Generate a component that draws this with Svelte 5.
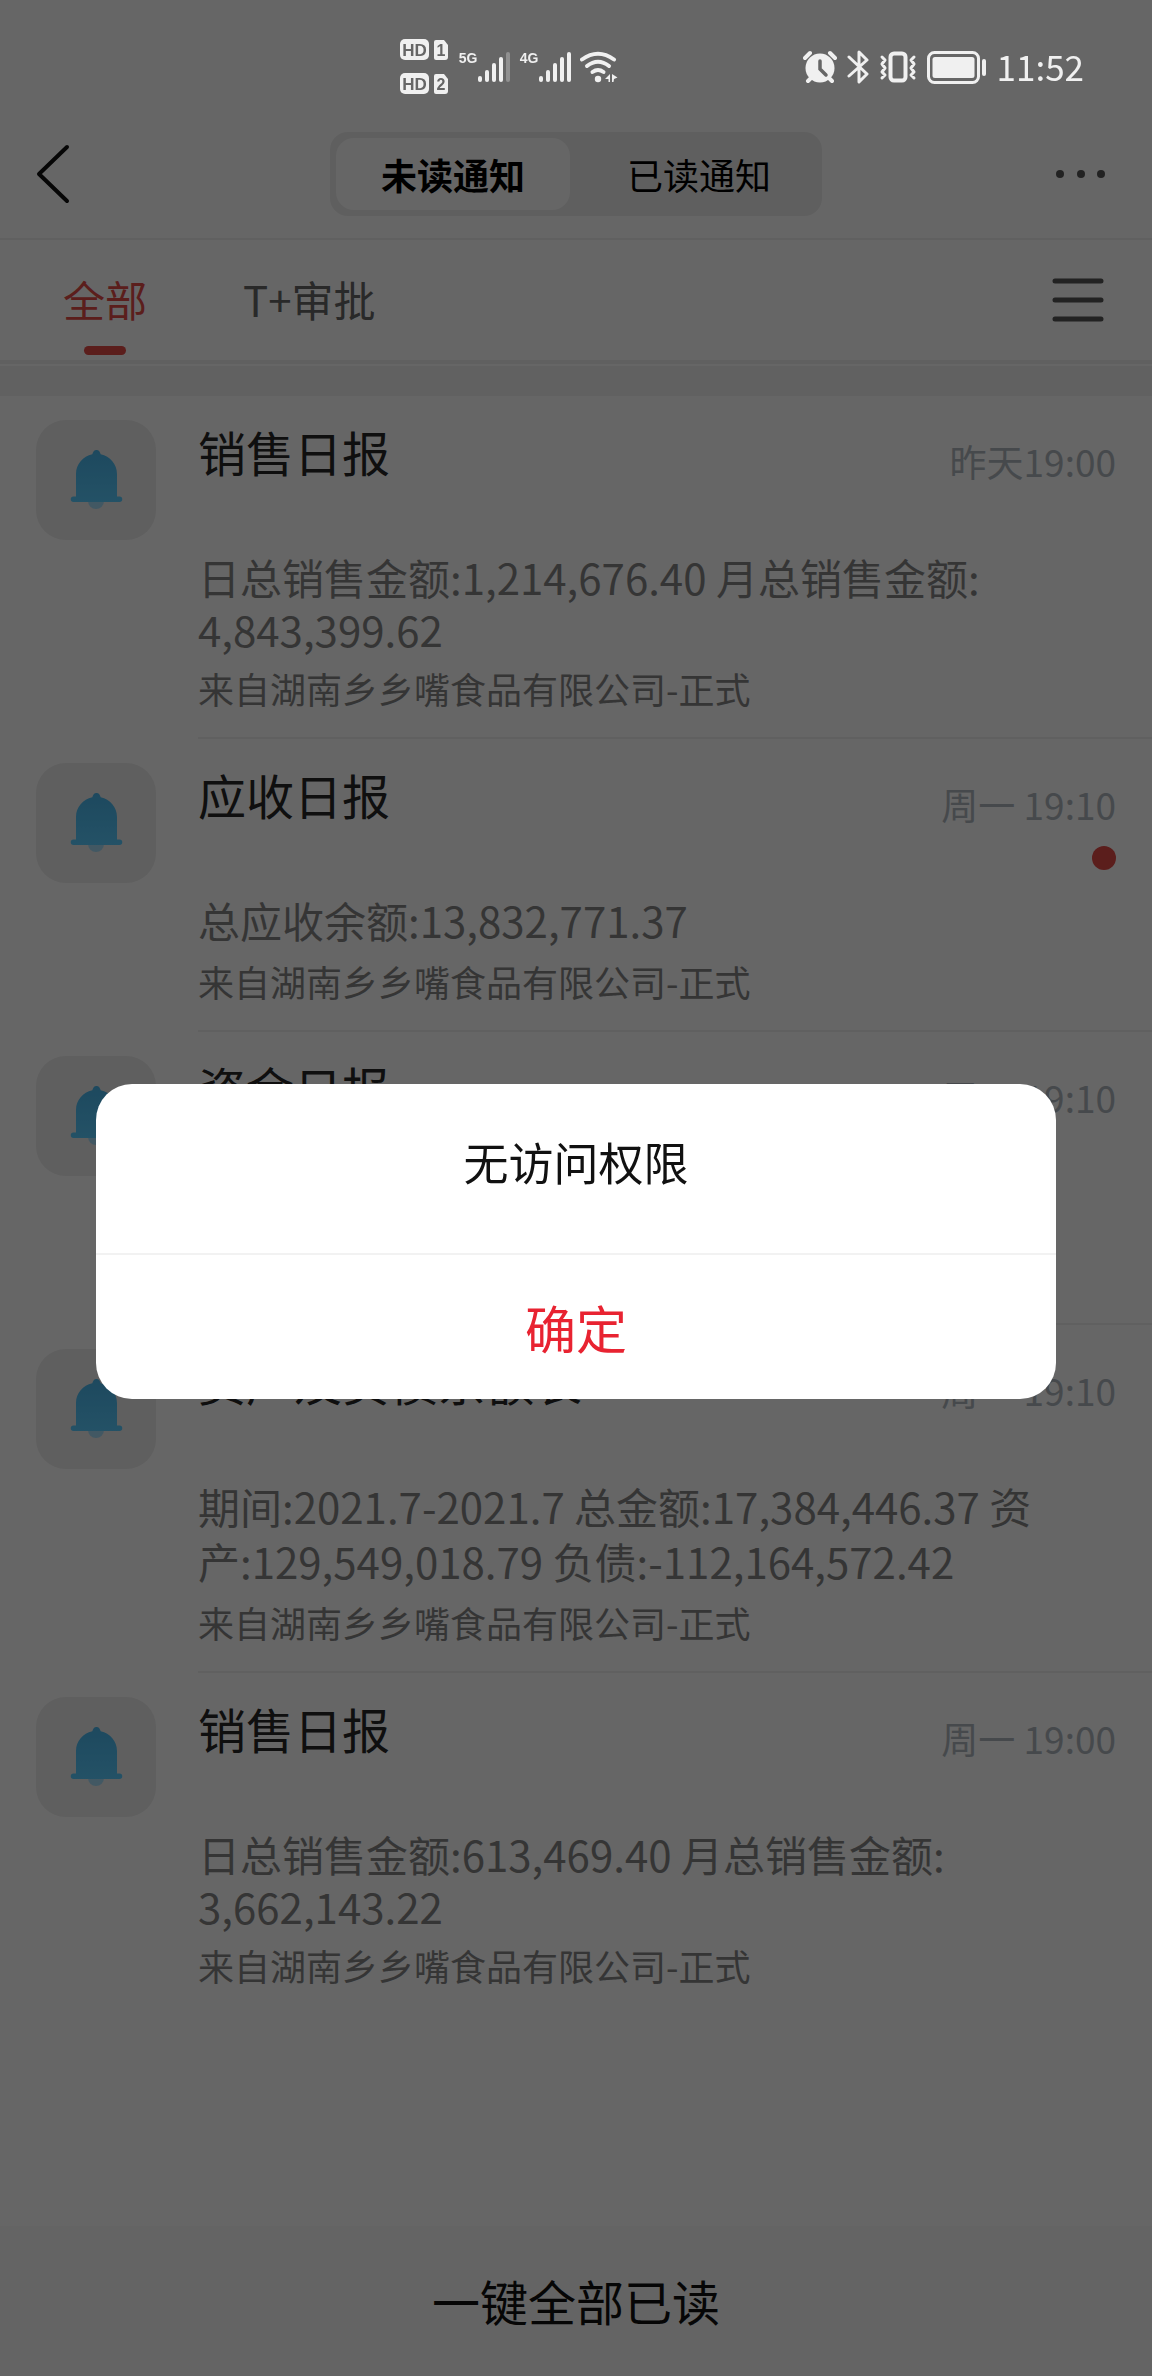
<script>
    let activePage = 'unread'
    let activeTab = 'all'
    let dialogShown = true

    const company = '来自湖南乡乡嘴食品有限公司-正式'

    let notices = [
        {id: 1, title: '销售日报', time: '昨天19:00', unread: false, lines: ['日总销售金额:1,214,676.40 月总销售金额:', '4,843,399.62']},
        {id: 2, title: '应收日报', time: '周一 19:10', unread: true, lines: ['总应收余额:13,832,771.37']},
        {id: 3, title: '资金日报', time: '周一 19:10', unread: false, lines: []},
        {id: 4, title: '资产及负债余额表', time: '周一 19:10', unread: false, lines: ['期间:2021.7-2021.7 总金额:17,384,446.37 资', '产:129,549,018.79 负债:-112,164,572.42']},
        {id: 5, title: '销售日报', time: '周一 19:00', unread: false, lines: ['日总销售金额:613,469.40 月总销售金额:', '3,662,143.22']},
    ]

    function isNumeric(line) {
        return /^[\d.,]+$/.test(line)
    }

    function markAllRead() {
        notices = notices.map((notice) => ({...notice, unread: false}))
    }
</script>

<div class="statusBar">
    <div class="statusGroup">
        <svg width="50" height="56" viewBox="0 0 50 56">
            {#each ['1', '2'] as sim, i}
                <g transform="translate(0 {i * 34})">
                    <rect x="0" y="0" width="29" height="21" rx="5" />
                    <text class="cut" x="14.5" y="16.5" font-size="17">HD</text>
                    <path d="M36 1h8l4 5v12a3 3 0 0 1-3 3h-9a2 2 0 0 1-2-2V3a2 2 0 0 1 2-2z" />
                    <text class="cut" x="41" y="17" font-size="16">{sim}</text>
                </g>
            {/each}
        </svg>
        {#each ['5G', '4G'] as network}
            <svg width="53" height="34" viewBox="-3 0 53 34">
                <text x="7" y="13" font-size="14">{network}</text>
                <rect x="17" y="26" width="4" height="6" rx="2" />
                <rect x="24" y="20" width="4" height="12" rx="2" />
                <rect x="31" y="13" width="4" height="19" rx="2" />
                <rect x="38" y="7" width="4" height="25" rx="2" />
                <rect x="45" y="2" width="4" height="30" rx="2" opacity={network == '5G' ? 0.3 : 1} />
            </svg>
        {/each}
        <svg width="38" height="34" viewBox="0 0 38 34">
            <g fill="none" stroke="#f0f0f0" stroke-width="4" stroke-linecap="round">
                <path d="M2 9.500Q18 -2 34 9.500" />
                <path d="M7 16Q18 7.500 29 16" />
                <path d="M12.500 22Q18 18 23.500 22" />
            </g>
            <circle cx="18" cy="29" r="3.200" />
            <path d="M30 24v8h-1.500v-3H25zM32 24l5.500 3.500-3.500 1.500-.5 3H32z" />
        </svg>
    </div>
    <div class="statusGroup right">
        <svg width="34" height="34" viewBox="0 0 34 34">
            <circle cx="17" cy="18" r="14.500" />
            <path d="M2 8l5-5M32 8l-5-5M8 28l-3 3M26 28l3 3" stroke="#f0f0f0" stroke-width="4" stroke-linecap="round" />
            <path d="M17 11v8l6 6" fill="none" stroke="#666" stroke-width="3.500" stroke-linecap="round" />
        </svg>
        <svg width="22" height="34" viewBox="0 0 22 34">
            <path d="M2 7l18 17-8 8V2l8 8L2 26" fill="none" stroke="#f0f0f0" stroke-width="3" stroke-linejoin="round" stroke-linecap="round" />
        </svg>
        <svg width="38" height="34" viewBox="0 0 38 34">
            <rect x="11.500" y="3.500" width="15" height="27" rx="3.500" fill="none" stroke="#f0f0f0" stroke-width="4" />
            <path d="M3 7l3 3-3 4 3 4-3 4 3 3-3 3M35 7l-3 3 3 4-3 4 3 4-3 3 3 3" fill="none" stroke="#f0f0f0" stroke-width="3" stroke-linejoin="round" stroke-linecap="round" />
        </svg>
        <svg width="60" height="34" viewBox="0 0 60 34">
            <rect x="1.500" y="2.500" width="50" height="30" rx="6" fill="none" stroke="#f0f0f0" stroke-width="3" />
            <rect x="5.500" y="7" width="42" height="21" rx="2.500" />
            <rect x="55" y="9" width="4" height="17" rx="2" />
        </svg>
        <span class="clock">11:52</span>
    </div>
</div>

<div class="page">
    <header class="header">
        <button class="iconButton" aria-label="返回">
            <svg width="36" height="60" viewBox="0 0 36 60" fill="none" stroke="#111" stroke-width="4" stroke-linecap="round" stroke-linejoin="round">
                <path d="M31 3L3 30l28 27" />
            </svg>
        </button>
        <div class="segment">
            <button class={activePage == 'unread' ? 'active' : ''} on:click={() => activePage = 'unread'}>未读通知</button>
            <button class={activePage == 'read' ? 'active' : ''} on:click={() => activePage = 'read'}>已读通知</button>
        </div>
        <button class="iconButton more" aria-label="更多">
            <svg width="60" height="12" viewBox="0 0 60 12" fill="#555">
                <circle cx="4" cy="6" r="4" />
                <circle cx="25" cy="6" r="4" />
                <circle cx="45" cy="6" r="4" />
            </svg>
        </button>
    </header>

    <nav class="tabs">
        <button class={activeTab == 'all' ? 'tab active' : 'tab'} on:click={() => activeTab = 'all'}>全部</button>
        <button class={activeTab == 'approval' ? 'tab active' : 'tab'} on:click={() => activeTab = 'approval'}>T+审批</button>
        <button class="iconButton menu" aria-label="菜单">
            <svg width="52" height="44" viewBox="0 0 52 44" stroke="#555" stroke-width="5" stroke-linecap="round">
                <path d="M3 3h46M3 22h46M3 41h46" />
            </svg>
        </button>
    </nav>

    <ul class="notices">
        {#each notices as notice (notice.id)}
            <li class="notice">
                <div class="avatar">
                    <svg width="120" height="120" viewBox="0 0 120 120">
                        <defs>
                            <linearGradient id="bell{notice.id}" x1="0" y1="0" x2="0" y2="1">
                                <stop offset="0" stop-color="#4ab6ec" />
                                <stop offset="1" stop-color="#5accff" />
                            </linearGradient>
                        </defs>
                        <path d="M52 80h16v1a8 8 0 0 1-16 0z" fill="#a5dcf7" />
                        <path fill="url(#bell{notice.id})" d="M60.500 30c2.500 0 3.500 2 4.200 4.300C74 36.500 81 44 81 54v22.500h2.500a2.750 2.750 0 0 1 0 5.500h-46a2.750 2.750 0 0 1 0-5.500H40V54c0-10 7-17.500 16.300-19.700.7-2.300 1.700-4.300 4.200-4.300z" />
                    </svg>
                </div>
                <div class="body">
                    <div class="head">
                        <h2>{notice.title}</h2>
                        <div class="meta">
                            <time>{notice.time}</time>
                            {#if notice.unread}
                                <span class="dot"></span>
                            {/if}
                        </div>
                    </div>
                    <p class="message">
                        {#each notice.lines as line}
                            <span class={isNumeric(line) ? 'line numeric' : 'line'}>{line}</span>
                        {/each}
                    </p>
                    <p class="source">{company}</p>
                </div>
            </li>
        {/each}
    </ul>

    <button class="readAll" on:click={markAllRead}>一键全部已读</button>
</div>

{#if dialogShown}
    <div class="overlay">
        <div class="dialog" role="alertdialog" aria-modal="true" aria-labelledby="dialogText">
            <p id="dialogText">无访问权限</p>
            <button on:click={() => dialogShown = false}>确定</button>
        </div>
    </div>
{/if}

<style>
    :global(body) {
        background-color: #ffffff;
        font-family: "Noto Sans CJK SC", sans-serif;
    }

    button {
        font-family: inherit;
        border: none;
        background-color: transparent;
        padding: 0;
        margin: 0;
        cursor: pointer;
    }

    svg {
        display: block;
    }

    /* status icons stay bright above the dimmed page */
    .statusBar {
        position: fixed;
        top: 0;
        left: 0;
        right: 0;
        z-index: 3;
        box-sizing: border-box;
        height: 108px;
        padding: 26px 68px 0 400px;
        display: flex;
        justify-content: space-between;
        align-items: center;
        color: #f0f0f0;
    }

    .statusBar svg {
        fill: #f0f0f0;
    }

    .statusGroup {
        display: flex;
        align-items: center;
        gap: 8px;
    }

    .statusGroup.right {
        gap: 10px;
    }

    .statusBar text {
        font-family: "Liberation Sans", sans-serif;
        font-weight: bold;
        text-anchor: middle;
    }

    .statusBar .cut {
        fill: #666666;
    }

    .clock {
        font-size: 35px;
        line-height: 36px;
        padding-bottom: 2px;
    }

    .page {
        box-sizing: border-box;
        min-height: 100vh;
        padding-top: 108px;
        display: flex;
        flex-direction: column;
    }

    .header {
        display: grid;
        grid-template-columns: 1fr auto 1fr;
        align-items: center;
        height: 128px;
        padding: 2px 36px 0;
        border-bottom: 2px solid #efefef;
    }

    .iconButton {
        justify-self: start;
    }

    .iconButton.more {
        justify-self: end;
    }

    .segment {
        display: flex;
        padding: 6px 0 6px 6px;
        border-radius: 18px;
        background-color: #ededed;
    }

    .segment button {
        width: 246px;
        height: 72px;
        border-radius: 18px;
        font-size: 36px;
        color: #000000;
    }

    .segment button.active {
        width: 234px;
        margin-right: 6px;
        background-color: #ffffff;
        font-weight: bold;
    }

    .tabs {
        display: flex;
        gap: 96px;
        height: 120px;
        padding: 0 48px 0 63px;
        border-bottom: 4px solid #efefef;
    }

    .tab {
        position: relative;
        padding-bottom: 3px;
        font-size: 42px;
        color: #666666;
    }

    .tab.active {
        color: #e34b48;
    }

    .tab.active::after {
        content: "";
        position: absolute;
        left: 50%;
        bottom: 5px;
        width: 42px;
        height: 9px;
        margin-left: -21px;
        border-radius: 5px;
        background-color: #e34b48;
    }

    .menu {
        margin-left: auto;
    }

    .notices {
        flex: 1;
        margin: 2px 0 0;
        padding: 0;
        list-style: none;
        border-top: 30px solid #f2f2f2;
    }

    .notice {
        display: flex;
        gap: 42px;
        padding-left: 36px;
    }

    .avatar {
        flex: none;
        width: 120px;
        height: 120px;
        margin-top: 24px;
        border-radius: 30px;
        background-color: #ededed;
    }

    .body {
        flex: 1;
        padding: 24px 36px 24px 0;
        border-bottom: 2px solid #efefef;
    }

    .notice:last-child .body {
        border-bottom: none;
    }

    .head {
        display: flex;
        justify-content: space-between;
        height: 129px;
    }

    h2 {
        margin: 0;
        font-size: 48px;
        line-height: 62px;
        font-weight: normal;
        color: #262626;
    }

    .meta {
        display: flex;
        flex-direction: column;
        align-items: flex-end;
        padding-top: 16px;
    }

    time {
        font-size: 37px;
        line-height: 50px;
        color: #afb7be;
    }

    .dot {
        width: 24px;
        height: 24px;
        margin-top: 17px;
        border-radius: 50%;
        background-color: #e34b48;
    }

    .message {
        min-height: 55px;
        margin: 0 0 9px;
        font-size: 42px;
        line-height: 55px;
        color: #868686;
    }

    .line {
        display: block;
        white-space: nowrap;
    }

    .line.numeric {
        line-height: 50px;
    }

    .source {
        margin: 0;
        font-size: 36px;
        line-height: 50px;
        color: #868686;
    }

    .readAll {
        height: 150px;
        padding-bottom: 3px;
        font-size: 48px;
        color: #111111;
        background-color: #fafafa;
    }

    .overlay {
        position: fixed;
        inset: 0;
        z-index: 2;
        padding: 106px 96px 0;
        display: flex;
        align-items: center;
        background-color: rgba(0, 0, 0, 0.6);
    }

    .dialog {
        flex: 1;
        border-radius: 36px;
        overflow: hidden;
        background-color: #ffffff;
        text-align: center;
    }

    .dialog p {
        margin: 0;
        padding: 48px 48px 61px;
        font-size: 45px;
        line-height: 60px;
        color: #111111;
        border-bottom: 2px solid #f2f2f2;
    }

    .dialog button {
        width: 100%;
        height: 144px;
        font-size: 51px;
        color: #e82331;
    }
</style>
